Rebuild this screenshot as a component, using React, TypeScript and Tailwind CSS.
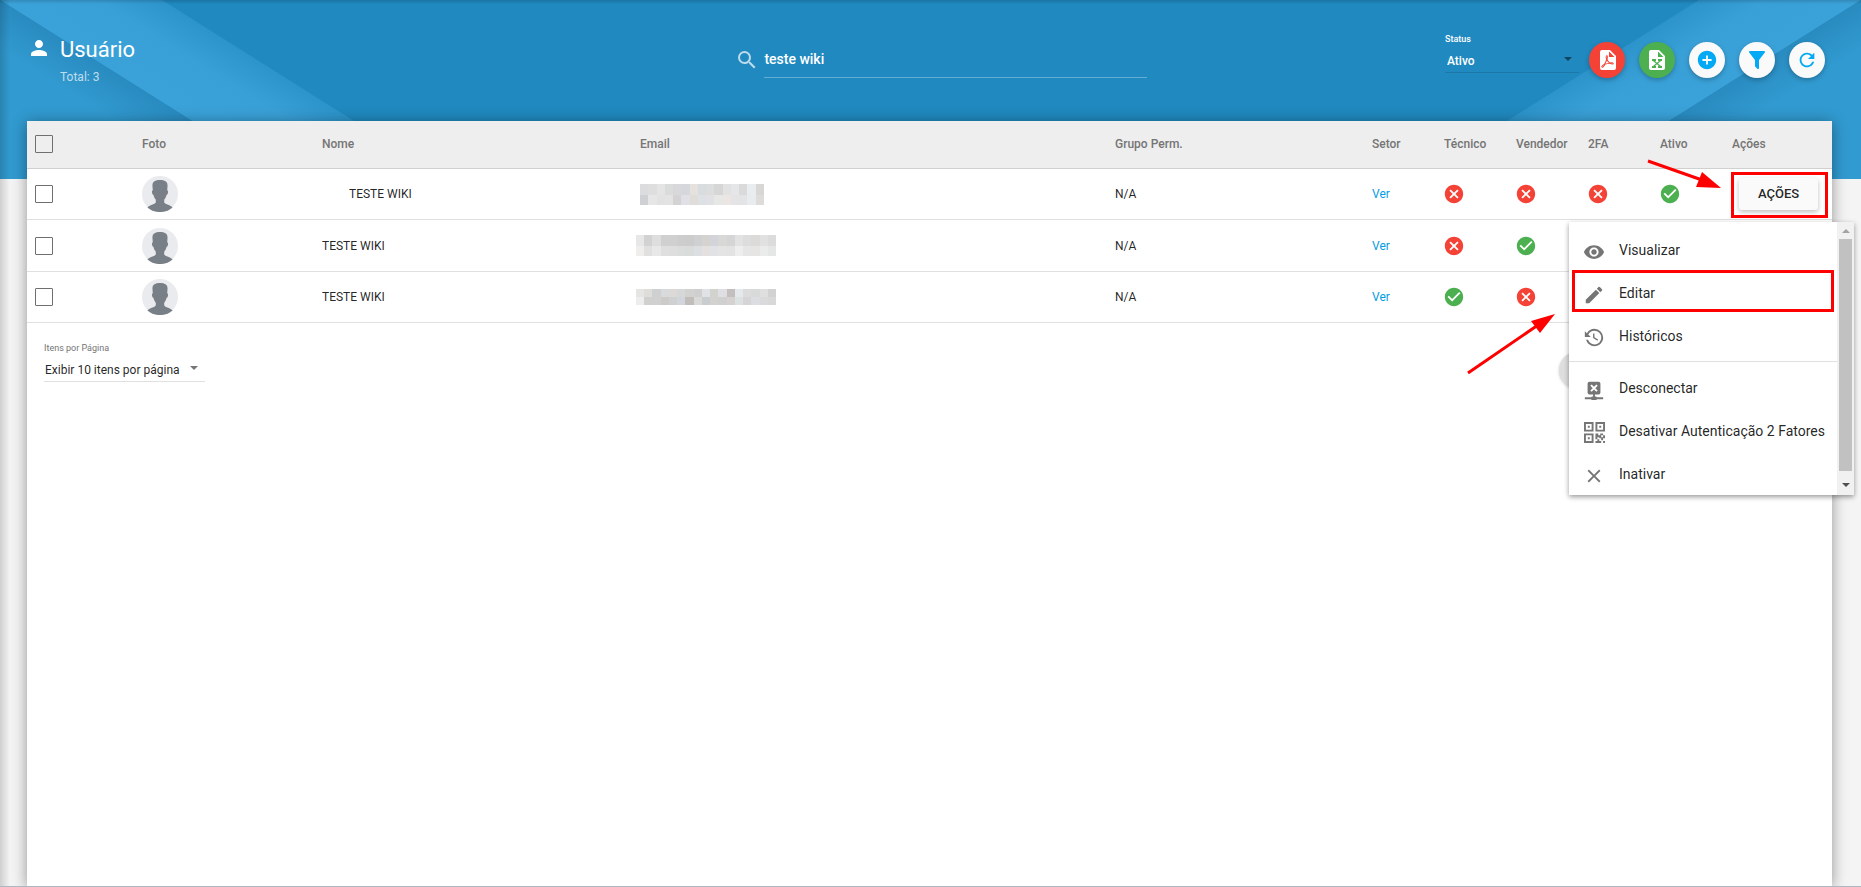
import { useState } from 'react'
import type { ReactNode } from 'react'
import { MdAddCircle, MdCancel, MdCheckCircle, MdClose, MdEdit, MdPerson, MdRefresh, MdSearch, MdVisibility } from 'react-icons/md'

type User = {
  id: number
  name: string
  nested?: boolean
  email: string[][]
  group: string
  technician: boolean
  seller: boolean
  twoFactor: boolean
  active: boolean
  rowClass: string
}

// each user's hidden email is drawn as two lines of colour blocks
const USERS: User[] = [
  {
    id: 1, name: 'TESTE WIKI', nested: true, group: 'N/A', technician: false, seller: false, twoFactor: false, active: true, rowClass: 'h-[51px]',
    email: [
      ['#dcdcde', '#dedede', '#e4e4e4', '#d9dcda', '#d8d8da', '#d5d7dc', '#e4e1df', '#d9dcdf', '#dcdedd', '#d6d6d6', '#e2e2e2', '#e5e6e8', '#dadada', '#e9edef', '#d9d7d6'],
      ['#cfd0d3', '#e6e6e6', '#e2e2e2', '#e3e3e4', '#d5d2d3', '#e0e0e6', '#e0dcda', '#dde1e3', '#e1e1e5', '#e6e8e6', '#ebe6e4', '#e4e4e6', '#e2e4e6', '#e8ecee', '#dedcdb'],
    ],
  },
  {
    id: 2, name: 'TESTE WIKI', group: 'N/A', technician: false, seller: true, twoFactor: true, active: true, rowClass: 'h-[52px]',
    email: [
      ['#e7e7e7', '#d2d2d2', '#dededf', '#d0d0d0', '#d1d0d1', '#cdcdcd', '#cdcccd', '#cfd0d2', '#d4d3cf', '#d2d4d9', '#d8d8d6', '#d5d5d5', '#e2e2e2', '#dddddd', '#dcdad9', '#e1e1e1', '#dcdcdc'],
      ['#efeeed', '#e0e0e0', '#e8e8e8', '#dfdfdf', '#dfdede', '#dbdcdc', '#dadcdb', '#dcdfe2', '#e3e0df', '#e0e2e6', '#e4e4e4', '#e3e3e3', '#eeeeee', '#e6e6e6', '#e6e5e4', '#eaecec', '#e5e7e6'],
    ],
  },
  {
    id: 3, name: 'TESTE WIKI', group: 'N/A', technician: true, seller: false, twoFactor: true, active: true, rowClass: 'h-[51px]',
    email: [
      ['#e5e5e4', '#deddda', '#cfd0d1', '#d9dadc', '#ddd9d6', '#d6d7d9', '#d2d2d1', '#cfcfcf', '#e1e2e5', '#d2d2cf', '#dfdfe3', '#c3bfbe', '#e4e9ec', '#dcdcdc', '#d8dad9', '#dfdfdf', '#d2d2d2'],
      ['#ededed', '#d0d1cf', '#cfd0cf', '#cecaca', '#cfd0d1', '#d3d5dc', '#c0bdbb', '#d9d9d8', '#cacdd0', '#d4d2cf', '#d1d0d1', '#d6d2d1', '#dce1e2', '#d6d4d5', '#dcdce3', '#dadadb', '#d8d8d8'],
    ],
  },
]

const PDF = 'M14 9h5.5L14 3.5V9M7 2h8l6 6v12a2 2 0 0 1-2 2H7a2 2 0 0 1-2-2V4a2 2 0 0 1 2-2m4.93 10.44c.41.9.93 1.64 1.53 2.15l.41.32c-.87.16-2.07.44-3.34.93l-.11.04.5-1.04c.45-.87.78-1.66 1.01-2.4m6.48 3.81c.18-.18.27-.41.28-.66.03-.2-.02-.39-.12-.55-.29-.47-1.04-.69-2.28-.69l-1.29.07-.87-.58c-.63-.52-1.2-1.43-1.6-2.56l.04-.14c.33-1.33.64-2.94-.02-3.6a.853.853 0 0 0-.61-.24h-.24c-.37 0-.7.39-.79.77-.37 1.33-.15 2.06.22 3.27v.01c-.25.88-.57 1.9-1.08 2.93l-.96 1.8-.89.49c-1.2.75-1.77 1.59-1.88 2.12-.04.19-.02.36.05.54l.03.05.48.31.44.11c.81 0 1.73-.95 2.97-3.07l.18-.07c1.03-.33 2.31-.56 4.03-.75 1.03.51 2.24.74 3 .74.44 0 .74-.11.91-.3m-.41-.71.09.11c-.01.1-.04.11-.09.13h-.04l-.19.02c-.46 0-1.17-.19-1.9-.51.09-.1.13-.1.23-.1 1.4 0 1.8.25 1.9.35M8.83 17c-.65 1.19-1.24 1.85-1.69 2 .05-.38.5-1.04 1.21-1.69l.48-.31m3.02-6.91c-.23-.9-.24-1.63-.07-2.05l.07-.12.15.05c.17.24.19.56.09 1.1l-.03.16-.16.82-.05.04z'
const EXCEL = 'M14 2H6a2 2 0 0 0-2 2v16a2 2 0 0 0 2 2h12a2 2 0 0 0 2-2V8l-6-6m-1 7V3.5L18.5 9H13m4 2h-4v2h1l-2 1.67L10 13h1v-2H7v2h1l3 2.5L8 18H7v2h4v-2h-1l2-1.67L14 18h-1v2h4v-2h-1l-3-2.5 3-2.5h1v-2z'
const FILTER = 'M14 12v7.88c.04.3-.06.62-.29.83-.39.39-1.02.39-1.41 0l-2.01-2.01a.99.99 0 0 1-.29-.83V12h-.03L4.21 4.62a1 1 0 0 1 .17-1.4c.19-.14.4-.22.62-.22h14c.22 0 .43.08.62.22a1 1 0 0 1 .17 1.4L14.03 12H14z'
const HISTORY = 'M11 7v5.11l4.71 2.79.79-1.28-4-2.37V7M12.5 2C8.97 2 5.91 3.92 4.27 6.77L2 4.5V11h6.5L5.75 8.25C6.96 5.73 9.5 4 12.5 4a7.5 7.5 0 0 1 7.5 7.5 7.5 7.5 0 0 1-7.5 7.5c-3.27 0-6.03-2.09-7.06-5h-2.1c1.1 4.03 4.77 7 9.16 7 5.24 0 9.5-4.25 9.5-9.5A9.5 9.5 0 0 0 12.5 2z'
const DISCONNECT = 'M14.59 6L12 8.59 9.41 6 8 7.41 10.59 10 8 12.59 9.41 14 12 11.41 14.59 14 16 12.59 13.41 10 16 7.41 14.59 6M17 3a2 2 0 0 1 2 2v10a2 2 0 0 1-2 2h-4v2h1a1 1 0 0 1 1 1h7v2h-7a1 1 0 0 1-1 1h-4a1 1 0 0 1-1-1H2v-2h7a1 1 0 0 1 1-1h1v-2H7a2 2 0 0 1-2-2V5a2 2 0 0 1 2-2h10z'
const QRCODE = 'M0 0h10v10H0V0M2 2v6h6V2H2M4 4h2v2H4V4M12 0h10v10H12V0M14 2v6h6V2h-6M16 4h2v2h-2V4M0 12h10v10H0V12M2 14v6h6v-6H2M4 16h2v2H4v-2M12 12h3v2h2v-2h3v2h2v3h-2v2h-2v-2h-2v-1h-2v2h-2v-6M12 20h2v-2h2v2h2v2h-6v-2M20 20h2v2h-2v-2M18 14v2h2v-2h-2'

function Glyph({ d, size = 24, box = 24 }: { d: string; size?: number; box?: number }) {
  return (
    <svg width={size} height={size} viewBox={`0 0 ${box} ${box}`} fill="currentColor" fillRule="evenodd" aria-hidden="true">
      <path d={d} />
    </svg>
  )
}

function Ribbon({ id, className }: { id: string; className: string }) {
  return (
    <svg className={className} width="460" height="179" viewBox="0 0 460 179" aria-hidden="true">
      <defs>
        <linearGradient id={`${id}-band`} gradientUnits="userSpaceOnUse" x1="0" y1="0" x2="46" y2="-73">
          <stop offset="0" stopColor="#3aa2d9" />
          <stop offset="0.6" stopColor="#39a0d7" />
          <stop offset="1" stopColor="#2c94cb" />
        </linearGradient>
        <linearGradient id={`${id}-corner`} gradientUnits="userSpaceOnUse" x1="0" y1="0" x2="-22" y2="35">
          <stop offset="0" stopColor="#298bc0" />
          <stop offset="1" stopColor="#319ad0" />
        </linearGradient>
      </defs>
      <path d="M0 0h162l284 179H284z" fill={`url(#${id}-band)`} />
      <path d="M0 0l284 179H0z" fill={`url(#${id}-corner)`} />
    </svg>
  )
}

function Avatar() {
  return (
    <svg className="block" width="36" height="36" viewBox="0 0 36 36" role="img" aria-label="Sem foto">
      <circle cx="18" cy="18" r="18" fill="#e9ebee" />
      <path
        d="M18 4c5 0 8 1.500 7.500 6.500l-.3 4c1.100 0 .9 1.500.6 2.700-.2 1-.7 1.600-1.200 1.500-.5 2.300-1.500 4-2.400 5v2.300c0 2.600 5.800 2.400 8.400 5.600A18 18 0 0 1 18 36a18 18 0 0 1-12.600-4.400C8 28.400 13.800 28.600 13.800 26v-2.300c-.9-1-1.900-2.700-2.400-5-.5.1-1-.5-1.200-1.500-.3-1.200-.5-2.700.6-2.700l-.3-4C10 5.500 13 4 18 4z"
        fill="#797f86"
      />
    </svg>
  )
}

function HiddenEmail({ rows, height }: { rows: string[][]; height: number }) {
  const width = rows[0].length * 8 + 4
  return (
    <svg className="block" width={width} height={height} viewBox={`0 0 ${rows[0].length} 2`} preserveAspectRatio="none" shapeRendering="crispEdges" role="img" aria-label="Email oculto">
      {rows.map((row, y) => row.map((fill, x) => <rect key={`${x}-${y}`} x={x} y={y} width="1" height="1" fill={fill} />))}
    </svg>
  )
}

function Flag({ on }: { on: boolean }) {
  return on
    ? <MdCheckCircle size={22} className="-ml-px block text-[#4caf50]" aria-label="Sim" />
    : <MdCancel size={22} className="-ml-px block text-[#f44336]" aria-label="Não" />
}

function Caret({ className }: { className: string }) {
  return (
    <svg className={className} width="8" height="4" viewBox="0 0 8 4" fill="currentColor" aria-hidden="true">
      <path d="M0 0h8L4 4z" />
    </svg>
  )
}

function RoundButton({ label, className, children }: { label: string; className: string; children: ReactNode }) {
  return (
    <button aria-label={label} className={`flex size-9 items-center justify-center rounded-full shadow-[0_2px_5px_rgba(0,0,0,0.26)] ${className}`}>
      {children}
    </button>
  )
}

function MenuItem({ icon, label, marked }: { icon: ReactNode; label: string; marked?: boolean }) {
  return (
    <li className="relative">
      <button role="menuitem" className="flex h-[43px] w-full items-center gap-3.5 pl-3.5 text-left text-sm text-black/87 hover:bg-neutral-100">
        <span className="mt-1 flex w-[22px] justify-center text-[#757575]">{icon}</span>
        {label}
      </button>
      {marked && <span className="pointer-events-none absolute inset-x-[3px] -top-px bottom-0.5 border-[3px] border-[#ff0000]" />}
    </li>
  )
}

function ActionsMenu() {
  return (
    <div className="absolute top-[101px] -right-[22px] z-10 flex h-[273px] w-[285px] overflow-hidden bg-white shadow-[0_2px_5px_rgba(0,0,0,0.4)]">
      <ul role="menu" className="min-w-0 flex-1 pt-1.5">
        <MenuItem icon={<MdVisibility size={22} />} label="Visualizar" />
        <MenuItem icon={<MdEdit size={22} />} label="Editar" marked />
        <MenuItem icon={<Glyph d={HISTORY} size={22} />} label="Históricos" />
        <li role="separator" className="my-1 h-px bg-[#e0e0e0]" />
        <MenuItem icon={<Glyph d={DISCONNECT} size={22} />} label="Desconectar" />
        <MenuItem icon={<Glyph d={QRCODE} size={21} box={22} />} label="Desativar Autenticação 2 Fatores" />
        <MenuItem icon={<MdClose size={22} />} label="Inativar" />
      </ul>
      <div className="flex w-[17px] flex-col items-center bg-[#f1f1f1]" aria-hidden="true">
        <div className="flex h-[17px] items-center"><Caret className="rotate-180 text-[#a3a3a3]" /></div>
        <div className="h-[232px] w-[13px] bg-[#c1c1c1]" />
        <div className="flex flex-1 items-center pt-1"><Caret className="text-[#505050]" /></div>
      </div>
    </div>
  )
}

function Arrows() {
  return (
    <svg className="pointer-events-none absolute top-8 right-[102px] z-20" width="270" height="230" viewBox="1460 153 270 230" fill="#ff0000" stroke="#ff0000" aria-hidden="true">
      <path d="M1648 161l54 19M1468 373l70-48" strokeWidth="3" fill="none" />
      <path d="M1721 188l-19-16-6 15zM1555 314l-24 7 9 12z" stroke="none" />
    </svg>
  )
}

const checkboxClass = 'block size-[18px] appearance-none rounded-[1px] border border-[#6f6f6f] bg-transparent checked:bg-sky-600'

export default function App() {
  const [search, setSearch] = useState('teste wiki')
  const [status, setStatus] = useState('Ativo')
  const [perPage, setPerPage] = useState('10')
  const [selected, setSelected] = useState<number[]>([])

  const allSelected = selected.length === USERS.length
  const toggle = (id: number) => setSelected(s => (s.includes(id) ? s.filter(x => x !== id) : [...s, id]))

  return (
    <div className="relative flex min-h-screen flex-col overflow-hidden border-b border-[#a9b8c3] bg-[#f4f4f4] font-[Roboto,sans-serif] text-xs text-black/87">
      <header className="relative h-[179px] bg-[#2089bf] text-white">
        <Ribbon id="left" className="absolute top-0 left-0" />
        <Ribbon id="right" className="absolute top-0 right-0 -scale-x-100" />
        <div className="relative grid grid-cols-[394fr_229fr_377fr] pr-9 pl-[27px]">
          <div className="flex gap-[9px] pt-9">
            <MdPerson size={24} />
            <div>
              <h1 className="text-[22px] leading-7">Usuário</h1>
              <p className="mt-[5px] leading-4 text-white/70">Total: {USERS.length}</p>
            </div>
          </div>

          <div className="flex gap-[5px] pt-12">
            <MdSearch size={24} className="shrink-0 text-white/70" />
            <input
              aria-label="Pesquisar"
              className="h-[30px] min-w-0 flex-1 border-b border-white/30 bg-transparent pb-2 text-sm font-medium text-white outline-none"
              value={search}
              onChange={e => setSearch(e.target.value)}
            />
          </div>

          <div className="flex items-start justify-end gap-3.5 pt-8">
            <div className="-mr-1 w-[134px] pt-px">
              <label htmlFor="status" className="block text-[9px] leading-3 font-medium">Status</label>
              <div className="relative mt-1">
                <select id="status" className="h-6 w-full appearance-none border-b border-black/12 bg-transparent pl-0.5 text-xs font-medium outline-none" value={status} onChange={e => setStatus(e.target.value)}>
                  <option>Ativo</option>
                  <option>Inativo</option>
                </select>
                <Caret className="pointer-events-none absolute top-2 right-[7px] text-black/50" />
              </div>
            </div>
            <div className="flex gap-3.5 pt-2.5">
              <RoundButton label="Exportar PDF" className="bg-[#f44336] text-white"><Glyph d={PDF} /></RoundButton>
              <RoundButton label="Exportar Excel" className="bg-[#4caf50] text-white"><Glyph d={EXCEL} /></RoundButton>
              <RoundButton label="Adicionar" className="bg-[#fafafa] text-[#03a9f4]"><MdAddCircle size={22} /></RoundButton>
              <RoundButton label="Filtrar" className="bg-[#fafafa] text-[#03a9f4]"><Glyph d={FILTER} /></RoundButton>
              <RoundButton label="Atualizar" className="bg-[#fafafa] text-[#03a9f4]"><MdRefresh size={22} /></RoundButton>
            </div>
          </div>
        </div>
      </header>

      <main className="relative -mt-[58px] mr-[29px] ml-[27px] flex-1 bg-white shadow-[0_2px_14px_rgba(0,0,0,0.4)]">
        <table className="w-full table-fixed border-separate border-spacing-0 text-left">
          <colgroup>
            <col className="w-[115px]" />
            <col className="w-[180px]" />
            <col className="w-[318px]" />
            <col />
            <col className="w-[257px]" />
            <col className="w-[72px]" />
            <col className="w-[72px]" />
            <col className="w-[72px]" />
            <col className="w-[72px]" />
            <col className="w-[72px]" />
            <col className="w-[100px]" />
          </colgroup>
          <thead>
            <tr className="h-12 bg-[#eeeeee] text-[#757575] *:border-b *:border-[#d0d0d0] *:px-0 *:pt-0 *:pb-0.5 *:font-medium">
              <th>
                <input
                  type="checkbox"
                  aria-label="Selecionar todos"
                  className={`ml-2 ${checkboxClass}`}
                  checked={allSelected}
                  onChange={() => setSelected(allSelected ? [] : USERS.map(u => u.id))}
                />
              </th>
              <th>Foto</th>
              <th>Nome</th>
              <th>Email</th>
              <th>Grupo Perm.</th>
              <th>Setor</th>
              <th>Técnico</th>
              <th>Vendedor</th>
              <th>2FA</th>
              <th>Ativo</th>
              <th>Ações</th>
            </tr>
          </thead>
          <tbody>
            {USERS.map((u, i) => (
              <tr key={u.id} className={`${u.rowClass} *:border-b *:border-[#e0e0e0] *:p-0`}>
                <td>
                  <input type="checkbox" aria-label={`Selecionar ${u.name}`} className={`ml-2 ${checkboxClass}`} checked={selected.includes(u.id)} onChange={() => toggle(u.id)} />
                </td>
                <td><Avatar /></td>
                <td><span className={u.nested ? 'ml-[27px]' : ''}>{u.name}</span></td>
                <td><div className={u.nested ? '' : '-ml-1'}><HiddenEmail rows={u.email} height={i === 2 ? 16 : 21} /></div></td>
                <td>{u.group}</td>
                <td><a href="#setor" className="text-[#039be5]">Ver</a></td>
                <td><Flag on={u.technician} /></td>
                <td><Flag on={u.seller} /></td>
                <td><Flag on={u.twoFactor} /></td>
                <td><Flag on={u.active} /></td>
                <td>
                  <div className="relative">
                    <button className="ml-[7px] block h-8 w-[79px] rounded-[3px] bg-[#fafafa] text-[13px] font-medium shadow-[0_2px_5px_rgba(0,0,0,0.26)]">AÇÕES</button>
                    {i === 0 && <span className="pointer-events-none absolute -top-1.5 -left-px h-[46px] w-[97px] border-[3px] border-[#ff0000]" />}
                  </div>
                </td>
              </tr>
            ))}
          </tbody>
        </table>

        <div className="flex items-start justify-between pt-[19px] pr-[237px] pl-[17px]">
          <div className="w-[161px]">
            <label htmlFor="per-page" className="block text-[9px] leading-3 text-[#757575]">Itens por Página</label>
            <div className="relative mt-1">
              <select id="per-page" className="h-6 w-full appearance-none border-b border-[#e0e0e0] bg-transparent pl-px text-xs outline-none" value={perPage} onChange={e => setPerPage(e.target.value)}>
                <option value="10">Exibir 10 itens por página</option>
                <option value="25">Exibir 25 itens por página</option>
                <option value="50">Exibir 50 itens por página</option>
              </select>
              <Caret className="pointer-events-none absolute top-2 right-[7px] text-[#757575]" />
            </div>
          </div>
          <button aria-label="Página anterior" className="mt-2.5 size-9 rounded-full bg-[#dedede] shadow-[0_1px_3px_rgba(0,0,0,0.2)]" />
        </div>

        <ActionsMenu />
        <Arrows />
      </main>

      {/* shade cast by the app frame along the top and left edges */}
      <div className="pointer-events-none absolute inset-y-0 left-0 w-2.5 bg-linear-to-r from-black/15 to-transparent" />
      <div className="pointer-events-none absolute inset-x-0 top-0 h-1 bg-linear-to-b from-black/15 to-transparent" />
    </div>
  )
}
